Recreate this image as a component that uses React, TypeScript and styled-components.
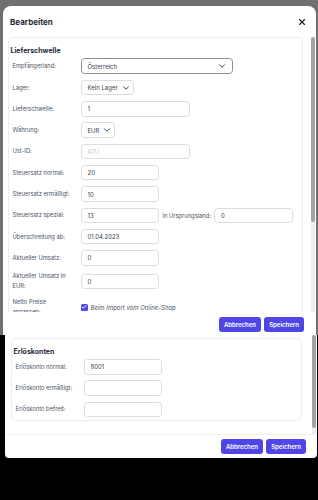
import styled, { createGlobalStyle } from 'styled-components';
import { X, ChevronDown, Check } from 'lucide-react';

const GlobalStyle = createGlobalStyle`
    html, body {
        margin: 0;
        padding: 0;
        background: #000;
        font-family: Inter, "Noto Sans", sans-serif;
    }
    * {
        box-sizing: border-box;
    }
`;

const Frame = styled.div<{ $bg: string; $height: number; $left: number; $top: number }>`
    height: ${(p) => p.$height}px;
    background: ${(p) => p.$bg};
    padding: ${(p) => p.$top}px 0 0 ${(p) => p.$left}px;
    overflow: hidden;
`;

const Modal = styled.div<{ $width: number; $round: 'top' | 'bottom' }>`
    width: ${(p) => p.$width}px;
    background: #fff;
    border-radius: ${(p) => (p.$round === 'top' ? '8px 8px 0 0' : '0 0 4px 4px')};
    display: flex;
    flex-direction: column;
`;

const Header = styled.div`
    height: 31px;
    display: flex;
    align-items: center;
    justify-content: space-between;
    padding: 0 9px 0 7.5px;
    color: #111827;
`;

const ModalTitle = styled.h2`
    margin: 0;
    font-size: 8px;
    font-weight: 700;
    color: #1f2937;
`;

const Body = styled.div<{ $height: number; $padLeft: number; $gap: number; $padTop: number }>`
    height: ${(p) => p.$height}px;
    display: flex;
    padding: 0 1.5px 0 ${(p) => p.$padLeft}px;
    gap: ${(p) => p.$gap}px;
    overflow: hidden;
    .scroll {
        flex: 1;
        padding-top: ${(p) => p.$padTop}px;
        overflow: hidden;
    }
`;

const Scrollbar = styled.div<{ $thumb: number }>`
    width: 3.5px;
    align-self: stretch;
    background: #ececec;
    border-radius: 2px;
    display: flex;
    flex-direction: column;
    &::before {
        content: '';
        height: ${(p) => p.$thumb}px;
        background: #a3a3a3;
        border-radius: 2px;
    }
`;

const Card = styled.div`
    border: 1px solid #ececec;
    border-radius: 5px;
    padding: 8px 0 3px 1.5px;
`;

const SectionTitle = styled.h3`
    margin: 0 0 3px;
    font-size: 7px;
    font-weight: 700;
    color: #1f2937;
    line-height: 9px;
`;

const Rows = styled.div`
    display: grid;
    grid-template-columns: 68px 1fr;
    row-gap: 5.8px;
    align-items: center;
    padding-left: 2px;
`;

const Label = styled.div`
    font-size: 5.8px;
    color: #4b5563;
    line-height: 10px;
    padding-right: 6px;
`;

const Controls = styled.div`
    display: flex;
    align-items: center;
`;

const Input = styled.div<{ $width: number; $blur?: boolean }>`
    width: ${(p) => p.$width}px;
    height: 15.5px;
    border: 1px solid #dcdcdc;
    border-radius: 3.5px;
    padding: 0 6px;
    font-size: 6px;
    color: ${(p) => (p.$blur ? '#c4c4c4' : '#374151')};
    display: flex;
    align-items: center;
    span {
        filter: ${(p) => (p.$blur ? 'blur(0.7px)' : 'none')};
    }
`;

const Select = styled.div<{ $width: number; $dark?: boolean }>`
    width: ${(p) => p.$width}px;
    height: ${(p) => (p.$dark ? 16 : 15.5)}px;
    border: 1px solid ${(p) => (p.$dark ? '#8e8e8e' : '#dcdcdc')};
    border-radius: 3.5px;
    padding: 0 5px 0 6px;
    font-size: 6px;
    color: #374151;
    white-space: nowrap;
    display: flex;
    align-items: center;
    justify-content: space-between;
    gap: 3px;
    svg {
        flex-shrink: 0;
        color: #374151;
    }
`;

const InlineLabel = styled.span`
    font-size: 5.8px;
    color: #4b5563;
    margin: 0 3px 0 4px;
    white-space: nowrap;
`;

const CheckRow = styled.label`
    display: flex;
    align-items: center;
    gap: 3px;
    font-size: 6px;
    font-style: italic;
    color: #4b5563;
    white-space: nowrap;
`;

const CheckBox = styled.span`
    width: 7px;
    height: 7px;
    border-radius: 1.5px;
    background: #4f46e5;
    display: flex;
    align-items: center;
    justify-content: center;
    color: #fff;
`;

const Footer = styled.div<{ $padTop: number; $padRight: number; $border?: boolean }>`
    display: flex;
    justify-content: flex-end;
    gap: 3px;
    padding: ${(p) => p.$padTop}px ${(p) => p.$padRight}px 4px 0;
    border-top: ${(p) => (p.$border ? '1px solid #f0f0f0' : 'none')};
`;

const Button = styled.button<{ $width: number }>`
    width: ${(p) => p.$width}px;
    height: 15px;
    border: none;
    border-radius: 3px;
    background: #4f46e5;
    color: #fff;
    font-family: Inter, sans-serif;
    font-size: 6px;
    font-weight: 600;
    padding: 0;
`;

const Buttons = () => (
    <>
        <Button $width={42}>Abbrechen</Button>
        <Button $width={40}>Speichern</Button>
    </>
);

const App = () => {
    return (
        <>
            <GlobalStyle />
            <Frame $bg="#707070" $height={335} $left={2.5} $top={6}>
                <Modal $width={313.5} $round="top">
                    <Header>
                        <ModalTitle>Bearbeiten</ModalTitle>
                        <X size={10} strokeWidth={2.6} />
                    </Header>
                    <Body $height={275} $padLeft={5.5} $gap={8.5} $padTop={0}>
                        <div className="scroll">
                            <Card>
                                <SectionTitle>Lieferschwelle</SectionTitle>
                                <Rows>
                                    <Label>Empfängerland:</Label>
                                    <Controls>
                                        <Select $width={152} $dark>
                                            Österreich
                                            <ChevronDown size={10} strokeWidth={2.4} />
                                        </Select>
                                    </Controls>
                                    <Label>Lager:</Label>
                                    <Controls>
                                        <Select $width={53}>
                                            Kein Lager
                                            <ChevronDown size={10} strokeWidth={2.4} />
                                        </Select>
                                    </Controls>
                                    <Label>Lieferschwelle:</Label>
                                    <Controls>
                                        <Input $width={109}>1</Input>
                                    </Controls>
                                    <Label>Währung:</Label>
                                    <Controls>
                                        <Select $width={34}>
                                            EUR
                                            <ChevronDown size={10} strokeWidth={2.4} />
                                        </Select>
                                    </Controls>
                                    <Label>Ust-ID:</Label>
                                    <Controls>
                                        <Input $width={109} $blur>
                                            <span>ATU</span>
                                        </Input>
                                    </Controls>
                                    <Label>Steuersatz normal:</Label>
                                    <Controls>
                                        <Input $width={78}>20</Input>
                                    </Controls>
                                    <Label>Steuersatz ermäßigt:</Label>
                                    <Controls>
                                        <Input $width={78}>10</Input>
                                    </Controls>
                                    <Label>Steuersatz spezial:</Label>
                                    <Controls>
                                        <Input $width={78}>13</Input>
                                        <InlineLabel>in Ursprungsland:</InlineLabel>
                                        <Input $width={79}>0</Input>
                                    </Controls>
                                    <Label>Überschreitung ab:</Label>
                                    <Controls>
                                        <Input $width={78}>01.04.2023</Input>
                                    </Controls>
                                    <Label>Aktueller Umsatz:</Label>
                                    <Controls>
                                        <Input $width={78}>0</Input>
                                    </Controls>
                                    <Label>Aktueller Umsatz in EUR:</Label>
                                    <Controls>
                                        <Input $width={78}>0</Input>
                                    </Controls>
                                    <Label>Netto Preise anpassen:</Label>
                                    <Controls>
                                        <CheckRow>
                                            <CheckBox>
                                                <Check size={6} strokeWidth={4} />
                                            </CheckBox>
                                            Beim Import vom Online-Shop
                                        </CheckRow>
                                    </Controls>
                                </Rows>
                            </Card>
                        </div>
                        <Scrollbar $thumb={185} />
                    </Body>
                    <Footer $padTop={5} $padRight={12}>
                        <Buttons />
                    </Footer>
                </Modal>
            </Frame>
            <Frame $bg="#000" $height={165} $left={5} $top={0}>
                <Modal $width={312} $round="bottom">
                    <Body $height={99} $padLeft={6} $gap={10} $padTop={3}>
                        <div className="scroll">
                            <Card>
                                <SectionTitle>Erlöskonten</SectionTitle>
                                <Rows>
                                    <Label>Erlöskonto normal:</Label>
                                    <Controls>
                                        <Input $width={78}>8001</Input>
                                    </Controls>
                                    <Label>Erlöskonto ermäßigt:</Label>
                                    <Controls>
                                        <Input $width={78}></Input>
                                    </Controls>
                                    <Label>Erlöskonto befreit:</Label>
                                    <Controls>
                                        <Input $width={78}></Input>
                                    </Controls>
                                </Rows>
                            </Card>
                        </div>
                        <Scrollbar $thumb={93} />
                    </Body>
                    <Footer $padTop={3.5} $padRight={11} $border>
                        <Buttons />
                    </Footer>
                </Modal>
            </Frame>
        </>
    );
};

export default App;
